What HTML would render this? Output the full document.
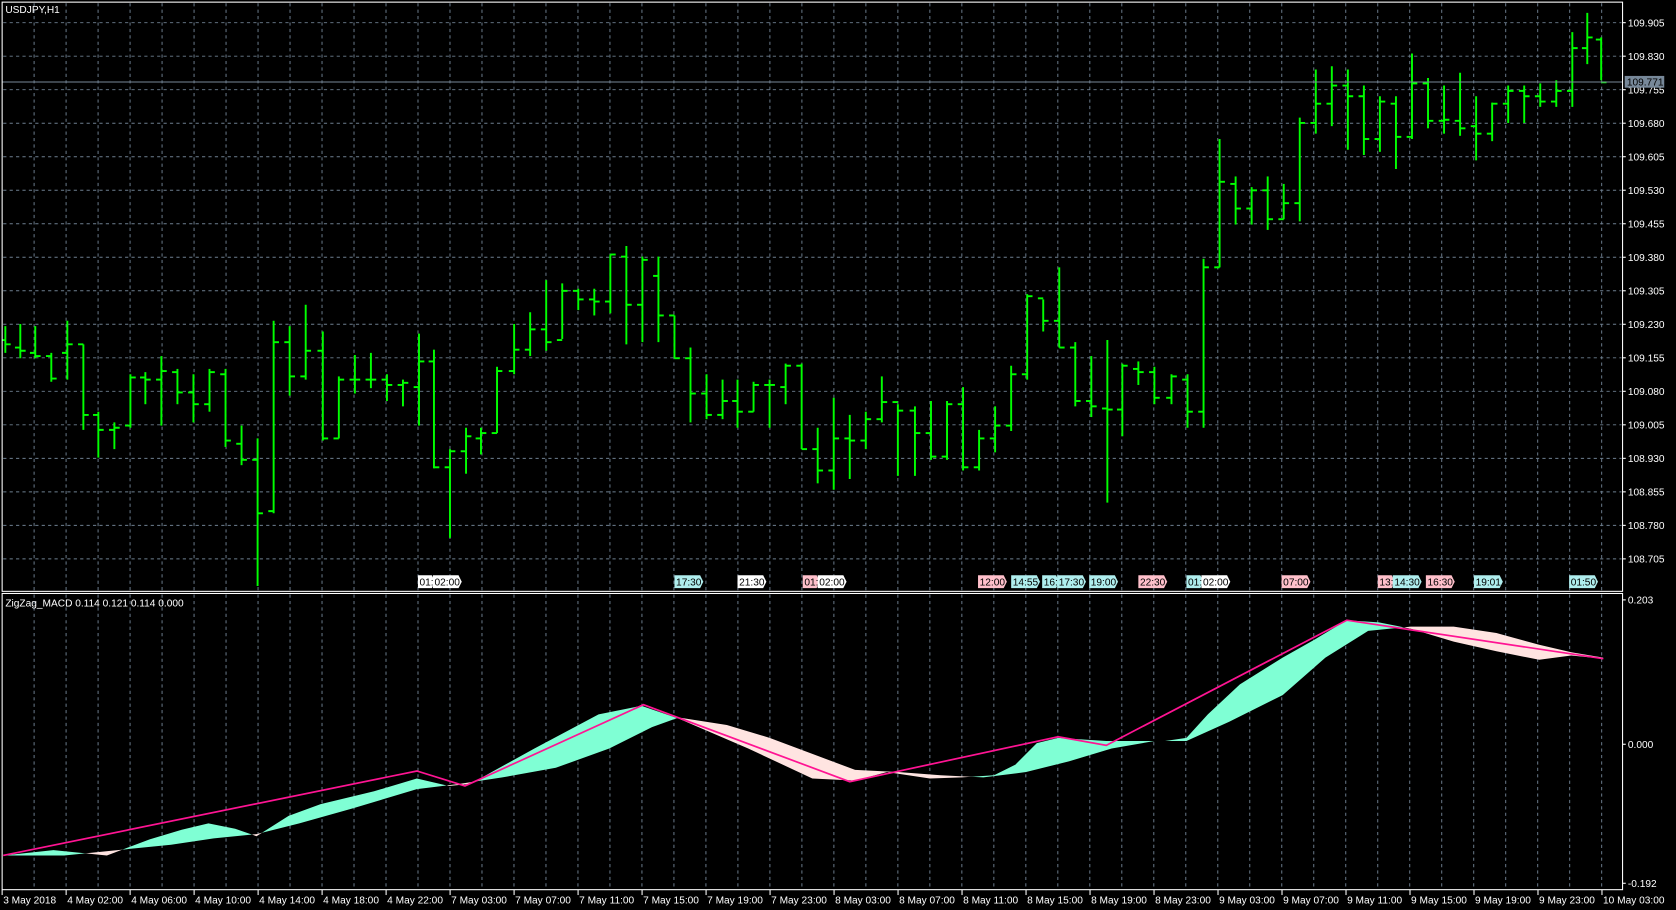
<!DOCTYPE html>
<html><head><meta charset="utf-8"><style>
html,body{margin:0;padding:0;background:#000;overflow:hidden}
svg{display:block}
text{font-family:"Liberation Sans",sans-serif;font-size:9.5px;fill:#fff}
</style></head><body>
<svg id="s" width="1676" height="910" viewBox="0 0 1568 851" preserveAspectRatio="none" xmlns="http://www.w3.org/2000/svg">
<defs>
<clipPath id="mainclip"><rect x="2" y="2" width="1516" height="551"/></clipPath>
<clipPath id="aboveB"><polygon id="cB"/></clipPath>
<clipPath id="aboveA"><polygon id="cA"/></clipPath>
</defs>
<rect width="1568" height="851" fill="#000"/>
<g id="grid"></g>
<g id="ma"></g>
<g id="bars" clip-path="url(#mainclip)"></g>
<line x1="2" y1="76.7" x2="1518" y2="76.7" stroke="#778899" stroke-width="1"/>
<g id="lbls"></g>
<rect x="2" y="2" width="1516" height="551" fill="none" stroke="#fff" stroke-width="1"/>
<rect x="2" y="555" width="1516" height="277" fill="none" stroke="#fff" stroke-width="1"/>
<text x="5" y="12">USDJPY,H1</text>
<text x="5" y="567">ZigZag_MACD 0.114 0.121 0.114 0.000</text>
<g id="axis"></g>
<rect x="1520" y="71" width="37" height="11" fill="#778899"/>
<text x="1522" y="80" style="fill:#000">109.771</text>
</svg>
<script>
var NS="http://www.w3.org/2000/svg";
function el(p,t,a,txt){var e=document.createElementNS(NS,t);for(var k in a)e.setAttribute(k,a[k]);if(txt!=null)e.textContent=txt;document.getElementById(p).appendChild(e);return e;}
for(var x=31.9;x<1518;x+=29.93){el('grid','line',{x1:x,y1:3,x2:x,y2:552,stroke:'#6e7f90','stroke-dasharray':'3,3','stroke-width':0.9});el('grid','line',{x1:x,y1:556,x2:x,y2:831,stroke:'#6e7f90','stroke-dasharray':'3,3','stroke-width':0.9});}
var pl=["109.905","109.830","109.755","109.680","109.605","109.530","109.455","109.380","109.305","109.230","109.155","109.080","109.005","108.930","108.855","108.780","108.705"];
for(var i=0;i<pl.length;i++){var y=21.2+i*31.34;el('grid','line',{x1:3,y1:y,x2:1517,y2:y,stroke:'#6e7f90','stroke-dasharray':'3,3','stroke-width':0.9});el('axis','line',{x1:1518,y1:y,x2:1521,y2:y,stroke:'#fff'});el('axis','text',{x:1523,y:y+3.5},pl[i]);}
[[561,"0.203"],[696,"0.000"],[826,"-0.192"]].forEach(function(a){el('axis','line',{x1:1518,y1:a[0],x2:1521,y2:a[0],stroke:'#fff'});el('axis','text',{x:1523,y:a[0]+3.5},a[1]);});
var tl=["3 May 2018","4 May 02:00","4 May 06:00","4 May 10:00","4 May 14:00","4 May 18:00","4 May 22:00","7 May 03:00","7 May 07:00","7 May 11:00","7 May 15:00","7 May 19:00","7 May 23:00","8 May 03:00","8 May 07:00","8 May 11:00","8 May 15:00","8 May 19:00","8 May 23:00","9 May 03:00","9 May 07:00","9 May 11:00","9 May 15:00","9 May 19:00","9 May 23:00","10 May 03:00"];
for(var i=0;i<tl.length;i++){var x=2+i*59.87;el('axis','line',{x1:x,y1:832,x2:x,y2:837,stroke:'#fff'});el('axis','text',{x:x+1,y:845},tl[i]);}
var B=[[5,305,330,318,322],[19,303,335,325,328],[33,305,335,330,333],[48,330,357,333,354],[63,300,355,330,322],[78,322,402,322,388],[92,385,428,388,402],[107,395,420,402,400],[122,350,400,398,353],[136,348,378,353,355],[151,333,398,355,347],[166,345,378,348,367],[181,350,395,367,378],[196,345,385,378,348],[211,345,418,350,412],[226,398,435,415,430],[241,410,548,430,480],[256,300,480,478,320],[271,305,370,320,352],[286,285,355,352,328],[302,310,412,328,410],[317,352,410,410,355],[332,332,368,355,355],[347,330,363,355,355],[362,350,375,355,360],[377,355,380,360,358],[392,312,398,362,338],[406,327,438,338,437],[421,420,503,437,422],[436,400,443,422,408],[450,400,425,410,405],[465,343,405,405,347],[481,303,350,347,327],[496,292,333,327,308],[511,262,328,308,320],[526,265,317,318,272],[541,270,290,272,280],[556,270,295,280,282],[571,238,293,282,238],[586,230,322,240,285],[601,240,320,285,243],[616,240,320,258,295],[631,295,335,295,335],[646,325,395,335,368],[661,350,392,368,388],[676,355,392,388,375],[690,355,400,375,385],[705,357,385,385,360],[720,355,400,360,360],[735,340,378,362,342],[750,340,420,342,420],[765,400,452,420,440],[780,372,458,440,410],[795,388,448,410,412],[810,385,420,412,392],[825,352,395,392,376],[840,378,445,376,384],[856,380,445,384,405],[871,375,430,405,427],[886,375,430,427,378],[901,362,440,378,437],[916,402,440,437,410],[931,380,423,410,398],[946,342,403,398,350],[961,275,355,350,277],[976,280,310,279,300],[991,250,325,300,325],[1006,320,380,325,375],[1021,333,390,375,380],[1036,318,470,382,383],[1050,340,408,383,342],[1065,338,360,345,348],[1080,343,378,348,372],[1096,350,378,372,352],[1111,350,400,355,385],[1126,242,400,385,250],[1141,130,250,250,170],[1156,165,210,172,195],[1171,175,210,195,178],[1186,165,215,178,205],[1201,172,205,205,190],[1216,110,207,190,115],[1231,65,125,115,97],[1246,62,118,97,80],[1261,65,140,80,90],[1276,80,145,90,130],[1291,90,142,130,95],[1306,90,158,97,128],[1321,50,130,128,78],[1336,73,120,78,113],[1351,80,125,113,112],[1366,68,127,113,120],[1381,90,150,118,125],[1396,96,132,125,97],[1411,80,115,97,85],[1426,80,115,85,90],[1441,78,100,90,95],[1456,75,100,95,85],[1471,30,100,85,45],[1485,12,60,45,35],[1498,35,75,37,77]];
B.forEach(function(b){var x=b[0];el('bars','line',{x1:x,y1:b[1],x2:x,y2:b[2],stroke:'#00ff00','stroke-width':1.8});el('bars','line',{x1:x-5,y1:b[3],x2:x,y2:b[3],stroke:'#00ff00','stroke-width':1.8});el('bars','line',{x1:x,y1:b[4],x2:x+5,y2:b[4],stroke:'#00ff00','stroke-width':1.8});});
var A=[[3,800],[50,795],[100,800],[140,785],[170,776],[195,770],[220,775],[240,782],[270,763],[300,752],[350,740],[390,728],[420,735],[440,733],[500,700],[560,668],[600,660],[635,672],[700,700],[760,728],[800,730],[830,722],[870,728],[900,727],[930,725],[950,715],[970,695],[990,690],[1035,693],[1060,693],[1090,693],[1110,690],[1130,668],[1160,640],[1200,615],[1230,598],[1260,580],[1290,582],[1320,588],[1360,600],[1400,609],[1440,617],[1470,613],[1500,616]];
var Bs=[[3,800],[60,800],[110,795],[160,790],[200,784],[240,780],[280,770],[330,756],[390,738],[430,733],[470,727],[520,718],[570,700],[610,680],[635,671],[680,678],[720,690],[760,705],[800,720],[840,722],[880,725],[920,727],[960,722],[1000,712],[1040,700],[1080,693],[1110,693],[1150,675],[1200,650],[1240,615],[1280,590],[1320,586],[1360,586],[1400,592],[1440,603],[1470,610],[1500,615]];
function pts(a){return a.map(function(p){return p[0]+','+p[1]}).join(' ');}
function below(a){return pts(a)+' 1500,832 3,832';}
function above(a){return pts(a)+' 1500,556 3,556';}
document.getElementById('cB').setAttribute('points',above(Bs));
document.getElementById('cA').setAttribute('points',above(A));
el('ma','polygon',{points:below(A),fill:'#7fffd4','clip-path':'url(#aboveB)'});
el('ma','polygon',{points:below(Bs),fill:'#ffe4e1','clip-path':'url(#aboveA)'});
el('ma','polyline',{points:'3,800 390,721 435,735 602,659 795,731 990,689 1035,697 1260,580 1500,616',fill:'none',stroke:'#ff1493','stroke-width':1.6});
var L=[[391,"01:",'#fff'],[405,"02:00",'#fff'],[631,"17:30",'#afeeee'],[690,"21:30",'#fff'],[751,"01:",'#ffc0cb'],[765,"02:00",'#fff'],[915,"12:00",'#ffc0cb'],[946,"14:55",'#afeeee'],[975,"16:",'#afeeee'],[989,"17:30",'#afeeee'],[1019,"19:00",'#afeeee'],[1065,"22:30",'#ffc0cb'],[1110,"01:",'#afeeee'],[1124,"02:00",'#fff'],[1199,"07:00",'#ffc0cb'],[1289,"13:",'#ffc0cb'],[1303,"14:30",'#afeeee'],[1334,"16:30",'#ffc0cb'],[1379,"19:01",'#afeeee'],[1468,"01:50",'#afeeee']];
L.forEach(function(l){var w=l[1].length>3?24:13;var x=l[0],y=538;el('lbls','polygon',{points:x+','+y+' '+(x+w)+','+y+' '+(x+w+3)+','+(y+6)+' '+(x+w)+','+(y+12)+' '+x+','+(y+12),fill:l[2]});el('lbls','text',{x:x+1.5,y:y+9.5,style:'fill:#000'},l[1]);});
</script>
</body></html>
